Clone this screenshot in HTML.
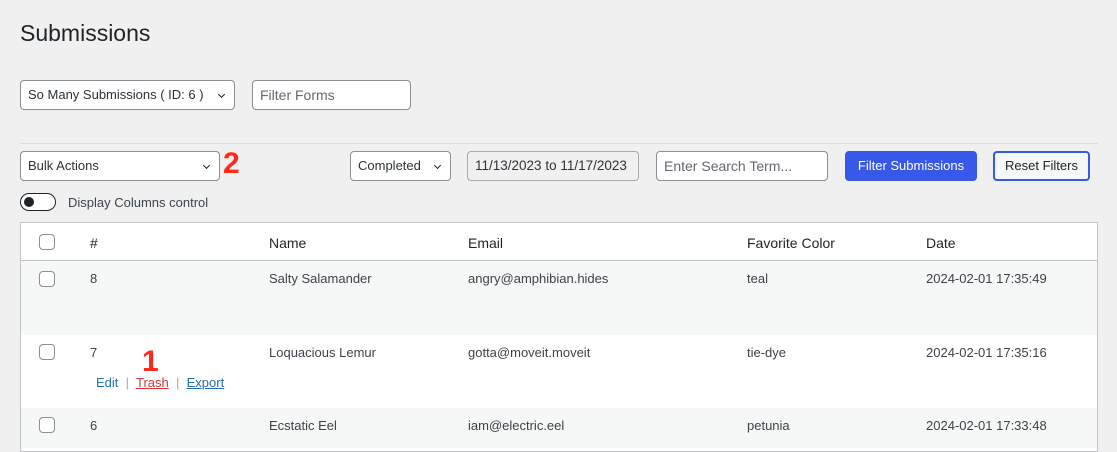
<!DOCTYPE html>
<html><head><meta charset="utf-8"><style>
*{box-sizing:border-box;margin:0;padding:0}
body{width:1117px;height:441px;overflow:hidden;background:#f0f0f1;font-family:"Liberation Sans",sans-serif;color:#1d2327;font-size:13px;position:relative}
.a{position:absolute}
.box{position:absolute;background:#fff;border:1px solid #8c8f94;border-radius:4px;height:30px;line-height:28px;padding-left:7px;font-size:13px}
.chev{position:absolute;right:10px;top:11px;width:5px;height:5px;border-right:1.2px solid #1d2327;border-bottom:1.2px solid #1d2327;transform:rotate(45deg)}
.cb{position:absolute;width:16px;height:16px;border:1px solid #8c8f94;border-radius:4px;background:#fff}
.t{position:absolute;font-size:13px;color:#3c434a}
.th{position:absolute;font-size:14px;color:#1d2327}
.red{position:absolute;color:#ff2a1a;font-weight:bold;font-size:30px;line-height:30px}
</style></head><body>
<div class="a" style="left:20px;top:20px;font-size:23px;color:#1d2327">Submissions</div>
<div class="box" style="left:20px;top:80px;width:215px;color:#2c3338">So Many Submissions ( ID: 6 )<span class="chev"></span></div>
<div class="box" style="left:252px;top:80px;width:159px;color:#646970;font-size:14px">Filter Forms</div>
<div class="a" style="left:20px;top:143px;width:1078px;height:1px;background:#dcdcde"></div>
<div class="box" style="left:20px;top:151px;width:200px;color:#2c3338">Bulk Actions<span class="chev"></span></div>
<div class="red" style="left:223px;top:149px">2</div>
<div class="box" style="left:350px;top:151px;width:101px;color:#2c3338">Completed<span class="chev"></span></div>
<div class="box" style="left:467px;top:151px;width:172px;background:#f0f0f1;border-color:#a7aaad;color:#2c3338;font-size:13.5px;overflow:hidden;white-space:nowrap">11/13/2023 to 11/17/2023</div>
<div class="box" style="left:656px;top:151px;width:172px;color:#646970;font-size:14px">Enter Search Term...</div>
<div class="box" style="left:845px;top:151px;width:132px;background:#3858e9;border-color:#3858e9;color:#fff;padding:0;text-align:center">Filter Submissions</div>
<div class="box" style="left:993px;top:151px;width:97px;background:#f6f7f7;border:2px solid #3858e9;line-height:26px;padding:0;text-align:center;color:#1d2327">Reset Filters</div>
<div class="a" style="left:20px;top:193px;width:36px;height:18px;border:1.5px solid #1d2327;border-radius:9px;background:#fff"><div class="a" style="left:3px;top:3px;width:10px;height:10px;border-radius:50%;background:#1d2327"></div></div>
<div class="t" style="left:68px;top:195px;color:#3c434a">Display Columns control</div>
<div class="a" style="left:20px;top:222px;width:1078px;height:230px;background:#fff;border:1px solid #c3c4c7"></div>
<div class="a" style="left:21px;top:260px;width:1076px;height:1px;background:#c3c4c7"></div>
<div class="a" style="left:21px;top:261px;width:1076px;height:74px;background:#f6f7f7"></div>
<div class="a" style="left:21px;top:408px;width:1076px;height:40px;background:#f6f7f7"></div>
<div class="cb" style="left:39px;top:234px"></div>
<div class="th" style="left:90px;top:235px">#</div>
<div class="th" style="left:269px;top:235px">Name</div>
<div class="th" style="left:468px;top:235px">Email</div>
<div class="th" style="left:747px;top:235px">Favorite Color</div>
<div class="th" style="left:926px;top:235px">Date</div>
<div class="cb" style="left:39px;top:271px"></div>
<div class="t" style="left:90px;top:271px">8</div><div class="t" style="left:269px;top:271px">Salty Salamander</div><div class="t" style="left:468px;top:271px">angry@amphibian.hides</div><div class="t" style="left:747px;top:271px">teal</div><div class="t" style="left:926px;top:271px">2024-02-01 17:35:49</div>
<div class="cb" style="left:39px;top:344px"></div>
<div class="t" style="left:90px;top:345px">7</div><div class="t" style="left:269px;top:345px">Loquacious Lemur</div><div class="t" style="left:468px;top:345px">gotta@moveit.moveit</div><div class="t" style="left:747px;top:345px">tie-dye</div><div class="t" style="left:926px;top:345px">2024-02-01 17:35:16</div>
<div class="red" style="left:142px;top:347px">1</div>
<div class="t" style="left:96px;top:375px;color:#2271b1">Edit <span style="color:#a7aaad">&nbsp;|&nbsp;</span> <span style="color:#d63638;text-decoration:underline">Trash</span> <span style="color:#a7aaad">&nbsp;|&nbsp;</span> <span style="text-decoration:underline">Export</span></div>
<div class="cb" style="left:39px;top:417px"></div>
<div class="t" style="left:90px;top:418px">6</div><div class="t" style="left:269px;top:418px">Ecstatic Eel</div><div class="t" style="left:468px;top:418px">iam@electric.eel</div><div class="t" style="left:747px;top:418px">petunia</div><div class="t" style="left:926px;top:418px">2024-02-01 17:33:48</div>
</body></html>
